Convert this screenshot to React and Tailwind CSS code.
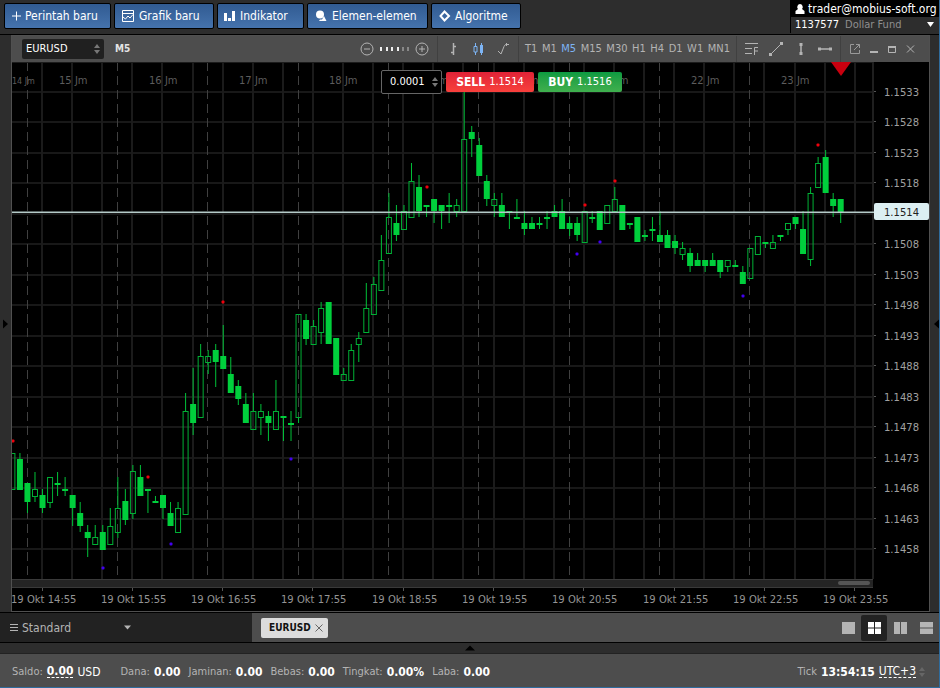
import React from "react";

// One entry per five-minute candle: [high, body top, body bottom, low, filled]
const CANDLES = [
  [453, 453, 489, 489, 0], [453, 459, 490, 490, 1], [483, 483, 502, 513, 1], [472, 489, 496, 502, 0],
  [489, 495, 508, 513, 1], [477, 477, 502, 508, 0], [472, 483, 485, 496, 1], [477, 489, 491, 496, 1],
  [495, 495, 508, 526, 1], [502, 513, 526, 532, 1], [525, 532, 538, 557, 1], [525, 537, 544, 544, 0],
  [525, 532, 550, 550, 1], [508, 526, 544, 544, 0], [477, 508, 532, 538, 0], [489, 501, 520, 525, 1],
  [465, 471, 513, 519, 0], [465, 477, 496, 496, 1], [489, 489, 491, 513, 1], [496, 501, 503, 503, 1],
  [495, 495, 508, 519, 1], [502, 513, 526, 526, 1], [502, 508, 532, 532, 0], [393, 411, 514, 514, 0],
  [368, 404, 423, 435, 1], [344, 356, 417, 417, 0], [350, 356, 362, 374, 0], [344, 350, 362, 387, 1],
  [325, 356, 369, 369, 1], [357, 374, 393, 393, 1], [380, 386, 399, 405, 1], [393, 404, 423, 423, 1],
  [393, 411, 429, 429, 0], [404, 411, 417, 435, 0], [411, 416, 423, 441, 1], [380, 411, 429, 429, 0],
  [416, 416, 418, 441, 1], [411, 423, 425, 441, 1], [314, 314, 417, 423, 0], [314, 320, 339, 345, 1],
  [320, 326, 344, 344, 0], [302, 308, 332, 344, 0], [302, 302, 344, 344, 1], [338, 338, 375, 375, 1],
  [368, 374, 380, 380, 0], [344, 350, 380, 380, 0], [332, 338, 344, 362, 0], [283, 308, 332, 332, 0],
  [277, 284, 314, 314, 0], [235, 260, 290, 290, 0], [193, 217, 253, 253, 0], [205, 223, 235, 241, 1],
  [205, 211, 229, 229, 0], [163, 181, 217, 217, 0], [175, 187, 211, 217, 1], [205, 205, 207, 217, 1],
  [199, 199, 211, 223, 1], [205, 205, 211, 229, 1], [193, 205, 207, 223, 1], [199, 205, 211, 217, 0],
  [85, 139, 211, 211, 0], [126, 132, 139, 157, 1], [138, 145, 176, 176, 1], [175, 181, 199, 206, 1],
  [193, 199, 205, 217, 0], [193, 205, 217, 217, 1], [211, 211, 213, 229, 1], [199, 217, 219, 219, 1],
  [211, 223, 229, 235, 1], [217, 223, 229, 229, 1], [217, 223, 225, 229, 1], [211, 217, 219, 229, 1],
  [205, 211, 217, 217, 1], [199, 211, 229, 229, 1], [217, 223, 229, 236, 1], [217, 223, 235, 241, 1],
  [211, 211, 242, 242, 0], [211, 217, 219, 223, 1], [211, 211, 230, 230, 1], [205, 205, 223, 223, 0],
  [187, 199, 211, 211, 0], [205, 205, 230, 230, 1], [223, 223, 225, 229, 1], [217, 217, 242, 242, 1],
  [230, 235, 237, 241, 1], [217, 229, 231, 241, 1], [211, 235, 242, 242, 1], [230, 235, 248, 248, 1],
  [235, 241, 248, 254, 1], [242, 248, 254, 260, 0], [248, 253, 266, 272, 1], [253, 260, 266, 266, 1],
  [260, 260, 266, 272, 1], [253, 260, 266, 266, 1], [260, 260, 272, 278, 1], [260, 260, 266, 272, 0],
  [260, 265, 267, 267, 1], [266, 272, 284, 284, 1], [248, 248, 278, 278, 0], [236, 236, 254, 254, 0],
  [242, 242, 244, 248, 1], [235, 242, 248, 248, 0], [235, 235, 237, 241, 1], [223, 223, 229, 235, 0],
  [217, 217, 224, 229, 1], [211, 229, 254, 254, 1], [187, 193, 259, 266, 0], [157, 163, 187, 187, 0],
  [150, 157, 193, 193, 1], [193, 199, 206, 217, 1], [199, 199, 212, 223, 1],
];

const PEAKS = [[13, 441], [148, 477], [223, 302], [427, 187], [585, 205], [615, 181], [818, 145]];
const TROUGHS = [[103, 568], [171, 544], [291, 459], [577, 254], [600, 242], [743, 296]];
const DAYS = ["15 Jm", "16 Jm", "17 Jm", "18 Jm", "19 Jm", "20 Jm", "21 Jm", "22 Jm", "23 Jm"];
const PRICES = [
  "1.1533", "1.1528", "1.1523", "1.1518", "", "1.1508", "1.1503", "1.1498",
  "1.1493", "1.1488", "1.1483", "1.1478", "1.1473", "1.1468", "1.1463", "1.1458",
];
const HOURS = [14, 15, 16, 17, 18, 19, 20, 21, 22, 23];

function Chart() {
  return (
    <svg viewBox="12 62 917 549" className="block w-full bg-black font-['DejaVu_Sans',sans-serif] text-[10px]" role="img" aria-label="EURUSD M5">
      <defs>
        <clipPath id="plot"><rect x="12" y="62" width="861" height="517" /></clipPath>
      </defs>
      <g clipPath="url(#plot)">
        {PRICES.map((_, i) => (
          <rect key={i} x="12" y={Math.round(90.5 + i * 30.5)} width="861" height="2" fill="#181818" />
        ))}
        {Array.from({ length: 28 }, (_, i) => (
          <rect key={i} x={Math.floor(41.5 + i * 30.1)} y="62" width="2" height="517" fill="#1b1b1b" />
        ))}
        {Array.from({ length: 9 }, (_, i) => {
          const x = Math.floor(27.3 + i * 90.3) + 0.5;
          return <path key={i} d={`M${x} 62V579`} stroke="#404040" strokeDasharray="9 5" />;
        })}
        <g fill="#5c5c5c">
          <text x="12" y="84" fontSize="8">14 Jm</text>
          {DAYS.map((d, i) => (
            <text key={d} x={Math.round(58.5 + i * 90.3)} y="84">{d}</text>
          ))}
        </g>
        {CANDLES.map(([high, top, bottom, low, filled], i) => {
          const x = 12.4 + i * 7.53;
          return (
            <g key={i}>
              {high < top && <rect x={x - 0.5} y={high} width="1" height={top - high} fill="#00c038" />}
              {low > bottom && <rect x={x - 0.5} y={bottom} width="1" height={low - bottom} fill="#00c038" />}
              {filled ? (
                <rect x={x - 3} y={top} width="6" height={bottom - top} fill="#00cf3c" />
              ) : (
                <rect x={x - 2.5} y={top + 0.5} width="5" height={bottom - top} fill="none" stroke="#00b035" />
              )}
            </g>
          );
        })}
        {PEAKS.map(([x, y]) => <rect key={x} x={x - 1.5} y={y - 1.5} width="3" height="3" rx="1" fill="#f0000c" />)}
        {TROUGHS.map(([x, y]) => <rect key={x} x={x - 1.5} y={y - 1.5} width="3" height="3" rx="1" fill="#4200f0" />)}
      </g>
      <rect x="12" y="62" width="861" height="1" fill="#1c1c1c" />
      <rect x="872" y="62" width="2" height="517" fill="#1f1f1f" />
      <rect x="12" y="211.5" width="862" height="1.5" fill="#b4cac8" />
      <path d="M831 62H851L841 76Z" fill="#c8000f" />
      {PRICES.map((p, i) => {
        const y = Math.round(90.5 + i * 30.5);
        return (
          <g key={i}>
            <rect x="874" y={y} width="2" height="1" fill="#555" />
            <text x="884" y={y + 5} fill="#a0a0a0">{p}</text>
          </g>
        );
      })}
      <rect x="874" y="203" width="55" height="17" rx="2" fill="#dceff2" />
      <text x="884" y="216" fill="#222">1.1514</text>
      <rect x="12" y="579" width="861" height="9" fill="#242424" />
      <path d="M12 579.5H873M12 587.5H873" stroke="#3a3a3a" />
      <rect x="838" y="581" width="32" height="4" rx="2" fill="#555" />
      {HOURS.map((h, i) => {
        const x = Math.round(41.5 + i * 90.3);
        return (
          <g key={h}>
            <rect x={x} y="588" width="1" height="3" fill="#555" />
            <text x={x - 31} y="603" fill="#949494">{`19 Okt ${h}:55`}</text>
          </g>
        );
      })}
    </svg>
  );
}

function Svg({ w = 14, h = 14, className = "", children }) {
  return (
    <svg width={w} height={h} viewBox={`0 0 ${w} ${h}`} className={`shrink-0 ${className}`} fill="none" stroke="currentColor" aria-hidden="true">
      {children}
    </svg>
  );
}

function Spinner({ className = "" }) {
  return (
    <Svg w={6} h={10} className={className}>
      <path d="M0 4L3 0L6 4ZM0 6H6L3 10Z" fill="currentColor" stroke="none" />
    </Svg>
  );
}

function TopButton({ className, icon, children }) {
  return (
    <button className={`flex h-[26px] items-center rounded-xs border border-black bg-linear-to-b from-[#315b92] to-[#4573ad] pl-[6px] text-xs whitespace-nowrap text-white ${className}`}>
      {icon}
      {children}
    </button>
  );
}

function Stat({ label, value }) {
  return (
    <span className="flex items-center gap-1">
      {label}: <b className="text-xs text-white">{value}</b>
    </span>
  );
}

function ToolButton({ label, className = "", children }) {
  return (
    <button aria-label={label} className={`flex items-center justify-center ${className}`}>
      {children}
    </button>
  );
}

export default function App() {
  const section = "flex h-full shrink-0 items-center border-l border-[#404040]";
  return (
    <div className="flex min-h-screen flex-col border-r border-b border-[#2f6b9c] bg-[#2d2d2d] font-['DejaVu_Sans_Condensed','DejaVu_Sans',sans-serif] text-[11px] leading-4 text-[#b4b4b4]">
      <header className="flex h-[35px] items-start justify-between border-b border-black">
        <nav className="flex gap-[3px] pt-[3px] pl-1">
          <TopButton className="w-[107px]" icon={<Svg w={14}><path d="M1 7H10M5.500 2.500V11.500" /></Svg>}>Perintah baru</TopButton>
          <TopButton className="w-[100px]" icon={<Svg w={18}><path d="M1.500 1.500H12.500V12.500H1.500ZM1 4.500H13M2 8L4.500 10L7 7L9 9L12 5.500" /></Svg>}>Grafik baru</TopButton>
          <TopButton className="w-[87px]" icon={<Svg w={16}><path d="M0 4H3V12H0ZM4 9H7V12H4ZM8 2H11V12H8Z" fill="currentColor" stroke="none" /></Svg>}>Indikator</TopButton>
          <TopButton className="w-[121px]" icon={<Svg w={18}><circle cx="6" cy="5.500" r="4" fill="currentColor" stroke="none" /><path d="M6 10.500H8L10 7L12.500 12H5Z" fill="currentColor" stroke="none" /></Svg>}>Elemen-elemen</TopButton>
          <TopButton className="w-[90px]" icon={<Svg w={17}><path d="M6.500 2.500L11 7L6.500 11.500L2.500 7Z" strokeWidth="2" /></Svg>}>Algoritme</TopButton>
        </nav>
        <div className="w-[149px] border-l border-black text-white">
          <div className="flex h-[17px] items-center gap-[3px] bg-black pl-1 text-xs whitespace-nowrap">
            <Svg w={10} h={12}><path d="M5 1A3 3 0 0 1 7 6L9.500 8V11H0.500V8L3 6A3 3 0 0 1 5 1Z" fill="currentColor" stroke="none" /></Svg>
            trader@mobius-soft.org
          </div>
          <button className="flex h-4 w-full items-center gap-[6px] pl-1 whitespace-nowrap">
            1137577 <span className="text-[#8f8f8f]">Dollar Fund</span>
            <Svg w={8} h={6} className="mr-1 ml-auto"><path d="M0 0H7L3.500 5Z" fill="currentColor" stroke="none" /></Svg>
          </button>
        </div>
      </header>

      <main className="flex">
        <button aria-label="Buka panel kiri" className="flex w-[11px] shrink-0 items-center text-black">
          <Svg w={10} h={10}><path d="M3 0.500L8 5L3 9.500Z" fill="currentColor" stroke="none" /></Svg>
        </button>
        <section className="relative min-w-0 flex-1 border border-[#505050]">
          <div className="flex h-[26px] items-center bg-[#4d4d4d]">
            <button className="ml-[10px] flex h-5 w-[82px] items-center justify-between rounded-xs bg-[#202020] pr-1 pl-1 text-white">
              EURUSD <Spinner className="text-[#777]" />
            </button>
            <b className="ml-[11px] flex-1 text-[10px] text-[#e4e4e4]">M5</b>
            <div className="flex h-full w-[77px] shrink-0 items-center">
              <ToolButton label="Perkecil"><Svg><circle cx="7" cy="7" r="6" /><path d="M4 7H10" /></Svg></ToolButton>
              <Svg w={29} h={4} className="mx-[6px]">
                <path d="M0 0H2V4H0ZM6 0H8V4H6ZM11 0H13V4H11ZM17 0H19V4H17Z" fill="#eee" stroke="none" />
                <path d="M22 0H24V4H22ZM27 0H29V4H27Z" fill="#888" stroke="none" />
              </Svg>
              <ToolButton label="Perbesar"><Svg><circle cx="7" cy="7" r="6" /><path d="M4 7H10M7 4V10" /></Svg></ToolButton>
            </div>
            <div className={`${section} w-[81px] justify-between px-2`}>
              <ToolButton label="Bar"><Svg><path d="M7.500 1V13M5 10.500H7M8 4.500H10" strokeWidth="1.500" /></Svg></ToolButton>
              <ToolButton label="Lilin" className="text-[#7db4f4]"><Svg><path d="M4.500 1V4M4.500 10V13M3 4.500H6V10H3ZM10.500 1V13" /><path d="M9 3H12V11H9Z" fill="currentColor" stroke="none" /></Svg></ToolButton>
              <ToolButton label="Garis"><Svg><path d="M2 9L5 12L8 4.500L9.500 2.500H13M10.500 1V4" /></Svg></ToolButton>
            </div>
            <div className={`${section} w-[218px] justify-between px-[6px]`}>
              {["T1", "M1", "M5", "M15", "M30", "H1", "H4", "D1", "W1", "MN1"].map((t) => (
                <button key={t} className={t === "M5" ? "text-[#7db4f4]" : ""}>{t}</button>
              ))}
            </div>
            <div className={`${section} w-[104px] justify-between px-2`}>
              <ToolButton label="Fibonacci"><Svg><path d="M0 1.500H13M0 6.500H7M0 11.500H7M9.500 13V5.500H13M9 9H13" /></Svg></ToolButton>
              <ToolButton label="Garis tren"><Svg><path d="M2 12L12 2" /><path d="M0 11H3V14H0ZM11 0H14V3H11Z" fill="currentColor" stroke="none" /></Svg></ToolButton>
              <ToolButton label="Garis vertikal"><Svg><path d="M7 2V12" strokeWidth="1.500" /><path d="M5.500 1H8.500V4H5.500ZM5.500 10H8.500V13H5.500Z" fill="currentColor" stroke="none" /></Svg></ToolButton>
              <ToolButton label="Garis horizontal"><Svg><path d="M1 7H13" strokeWidth="1.500" /><path d="M0 5.500H3V8.500H0ZM11 5.500H14V8.500H11Z" fill="currentColor" stroke="none" /></Svg></ToolButton>
            </div>
            <div className={`${section} w-[89px] gap-[9px] pl-2`}>
              <ToolButton label="Lepas"><Svg w={12} h={12}><path d="M5 1.500H1.500V10.500H10.500V7M5 7L10.500 1.500M7 1.500H10.500V5" stroke="#999" /></Svg></ToolButton>
              <ToolButton label="Kecilkan"><Svg w={9} h={12}><path d="M0 9H8" strokeWidth="2" /></Svg></ToolButton>
              <ToolButton label="Besarkan"><Svg w={9} h={12}><path d="M0.500 3V9.500H7.500V3M0 4H8" /><path d="M0 3H8V5H0Z" fill="currentColor" stroke="none" /></Svg></ToolButton>
              <ToolButton label="Tutup"><Svg w={9} h={12}><path d="M1 2.500L8 9.500M8 2.500L1 9.500" /></Svg></ToolButton>
            </div>
          </div>
          <Chart />
          <div className="absolute top-[34px] left-[369px] flex items-center gap-1 text-white">
            <label className="flex h-6 w-[61px] items-center justify-between rounded-xs border border-[#666] bg-black pr-[3px] pl-2">
              <input aria-label="Volume" defaultValue="0.0001" className="w-10 bg-transparent text-[11px] outline-none" />
              <Spinner className="text-[#777]" />
            </label>
            <button className="flex h-5 w-[88px] items-center justify-center gap-1 rounded-xs bg-linear-to-b from-[#e02237] to-[#f8403c]">
              <b className="text-xs">SELL</b> 1.1514
            </button>
            <button className="flex h-5 w-[84px] items-center justify-center gap-1 rounded-xs bg-linear-to-b from-[#0a9a41] to-[#3fb04e]">
              <b className="text-xs">BUY</b> 1.1516
            </button>
          </div>
        </section>
        <button aria-label="Buka panel kanan" className="flex w-[9px] shrink-0 items-center justify-end text-black">
          <Svg w={6} h={10}><path d="M6 0.500L1 5L6 9.500Z" fill="currentColor" stroke="none" /></Svg>
        </button>
      </main>

      <div className="flex h-[31px] border-y border-black bg-[#4d4d4d]">
        <button className="flex w-[252px] items-center bg-[#222] pl-[10px] text-xs">
          <Svg w={9} h={10} className="mr-[3px]"><path d="M0 1.500H8M0 4.500H8M0 7.500H8" /></Svg>
          Standard
          <Svg w={7} h={5} className="ml-[53px]"><path d="M0 0.500H7L3.500 4.500Z" fill="currentColor" stroke="none" /></Svg>
        </button>
        <div className="flex flex-1 items-center justify-between pl-[9px]">
          <div className="flex h-5 w-[67px] items-center justify-between rounded-xs bg-[#dcdcdc] pr-[5px] pl-2 text-[10px] text-[#111]">
            <b>EURUSD</b>
            <button aria-label="Tutup EURUSD"><Svg w={8} h={8} className="text-[#666]"><path d="M0.500 0.500L7.500 7.500M7.500 0.500L0.500 7.500" /></Svg></button>
          </div>
          <div className="flex items-center">
            <ToolButton label="Satu" className="size-[26px]"><Svg w={13} h={12}><path d="M0 0H13V12H0Z" fill="#b4b4b4" stroke="none" /></Svg></ToolButton>
            <ToolButton label="Kotak" className="size-[26px] rounded-xs bg-[#222]"><Svg w={13} h={12}><path d="M0 0H6V5.500H0ZM7 0H13V5.500H7ZM0 6.500H6V12H0ZM7 6.500H13V12H7Z" fill="#fff" stroke="none" /></Svg></ToolButton>
            <ToolButton label="Kolom" className="size-[26px]"><Svg w={13} h={12}><path d="M0 0H6V12H0ZM7 0H13V12H7Z" fill="#b4b4b4" stroke="none" /></Svg></ToolButton>
            <ToolButton label="Baris" className="size-[26px]"><Svg w={13} h={12}><path d="M0 0H13V5.500H0ZM0 6.500H13V12H0Z" fill="#b4b4b4" stroke="none" /></Svg></ToolButton>
          </div>
        </div>
      </div>

      <button aria-label="Buka panel bawah" className="flex h-[10px] items-center justify-center text-black">
        <Svg w={10} h={6}><path d="M0 5.500L5 0.500L10 5.500Z" fill="currentColor" stroke="none" /></Svg>
      </button>

      <footer className="flex flex-1 items-center gap-2 border-t border-[#222] bg-[#4d4d4d] pt-[2px] pr-[14px] pl-3">
        <span className="flex items-center gap-1 pr-[12px]">
          Saldo: <b className="border-b border-dashed border-white text-xs leading-3 text-white">0.00</b>
          <span className="text-xs text-white">USD</span>
        </span>
        <Stat label="Dana" value="0.00" />
        <Stat label="Jaminan" value="0.00" />
        <Stat label="Bebas" value="0.00" />
        <Stat label="Tingkat" value="0.00%" />
        <Stat label="Laba" value="0.00" />
        <span className="ml-auto flex items-center gap-1">
          Tick <b className="text-xs text-white">13:54:15</b>
          <button className="flex items-center gap-[3px] text-white">
            <span className="border-b border-dashed border-white text-xs leading-3">UTC+3</span>
            <Spinner className="text-[#666]" />
          </button>
        </span>
      </footer>
    </div>
  );
}
